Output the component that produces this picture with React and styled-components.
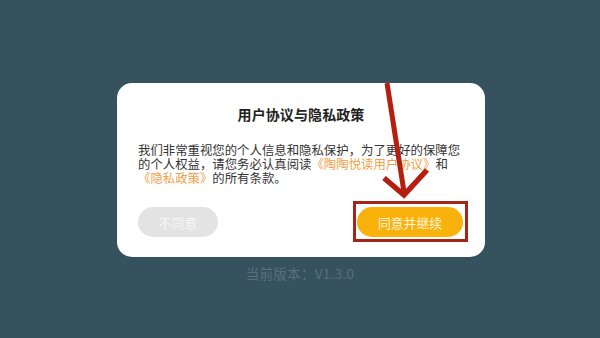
import React from "react";
import styled, { createGlobalStyle } from "styled-components";

const Global = createGlobalStyle`
  html, body { margin: 0; padding: 0; }
  body {
    width: 600px;
    height: 338px;
    overflow: hidden;
    background: #36525f;
    font-family: "Noto Sans CJK SC", "Noto Sans", sans-serif;
  }
`;

const Page = styled.div`
  position: relative;
  width: 600px;
  height: 338px;
  display: flex;
  flex-direction: column;
  align-items: center;
  padding-top: 83px;
  box-sizing: border-box;
`;

const Dialog = styled.div`
  width: 368px;
  height: 174px;
  margin-left: 2px;
  background: #ffffff;
  border-radius: 15px;
  box-sizing: border-box;
  padding: 21px 21px 20px 21px;
  display: flex;
  flex-direction: column;
`;

const Title = styled.div`
  text-align: center;
  font-size: 14px;
  font-weight: 700;
  line-height: 20px;
  color: #222222;
  letter-spacing: 0.1px;
`;

const Body = styled.p`
  margin: 19px 0 0 0;
  font-size: 12.4px;
  line-height: 14px;
  color: #333333;
  white-space: nowrap;
`;

const Link = styled.span`
  color: #f2a048;
`;

const Actions = styled.div`
  margin-top: auto;
  display: flex;
  justify-content: space-between;
  align-items: center;
  padding-right: 1px;
`;

const Button = styled.button`
  height: 30px;
  width: ${(p) => p.$w}px;
  border: none;
  border-radius: 15px;
  padding: 0;
  font-family: inherit;
  font-size: 12.8px;
  color: ${(p) => (p.$primary ? "#fff4dc" : "#f6f6f6")};
  background: ${(p) => (p.$primary ? "#f9b10c" : "#e3e3e3")};
`;

const Highlight = styled.div`
  position: relative;
  display: flex;
`;

const Frame = styled.span`
  position: absolute;
  top: -6px;
  bottom: -5px;
  left: -4px;
  right: -5px;
  border: 3px solid #a42619;
  pointer-events: none;
`;

const Version = styled.div`
  margin-top: 7px;
  font-size: 13.5px;
  line-height: 18px;
  color: #5a6f7a;
  letter-spacing: 0.3px;
`;

const Arrow = styled.svg`
  position: absolute;
  left: 0;
  top: 0;
  pointer-events: none;
`;

export default function App() {
  return (
    <>
      <Global />
      <Page>
        <Dialog>
          <Title>用户协议与隐私政策</Title>
          <Body>
            我们非常重视您的个人信息和隐私保护，为了更好的保障您
            <br />
            的个人权益，请您务必认真阅读<Link>《陶陶悦读用户协议》</Link>和
            <br />
            <Link>《隐私政策》</Link>的所有条款。
          </Body>
          <Actions>
            <Button $w={80}>不同意</Button>
            <Highlight>
              <Button $primary $w={106}>同意并继续</Button>
              <Frame />
            </Highlight>
          </Actions>
        </Dialog>
        <Version>当前版本：V1.3.0</Version>
        <Arrow width="600" height="338" viewBox="0 0 600 338">
          <g stroke="#b51f10" strokeWidth="5" fill="none" strokeLinecap="butt" strokeLinejoin="miter">
            <line x1="387" y1="83" x2="404" y2="192" />
            <polyline points="384,178 404,195 427,170" strokeWidth="5.5" />
          </g>
        </Arrow>
      </Page>
    </>
  );
}
